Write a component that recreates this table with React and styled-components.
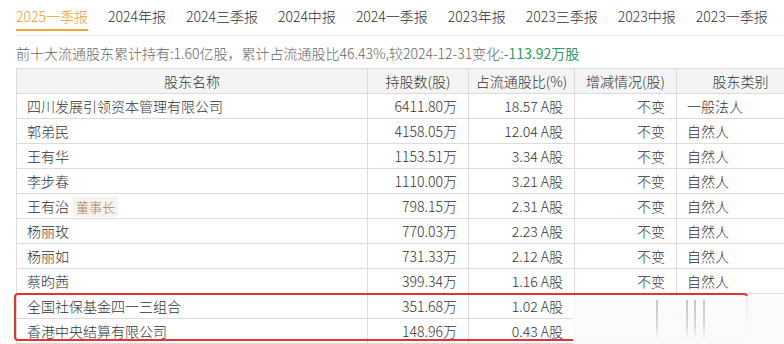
import React from 'react'
import styled, { createGlobalStyle } from 'styled-components';

const tabs = ['2025一季报', '2024年报', '2024三季报', '2024中报', '2024一季报', '2023年报', '2023三季报', '2023中报', '2023一季报'];

const rows = [
  { name: '四川发展引领资本管理有限公司', num: '6411.80万', pct: '18.57 A股', chg: '不变', type: '一般法人' },
  { name: '郭弟民', num: '4158.05万', pct: '12.04 A股', chg: '不变', type: '自然人' },
  { name: '王有华', num: '1153.51万', pct: '3.34 A股', chg: '不变', type: '自然人' },
  { name: '李步春', num: '1110.00万', pct: '3.21 A股', chg: '不变', type: '自然人' },
  { name: '王有治', tag: '董事长', num: '798.15万', pct: '2.31 A股', chg: '不变', type: '自然人' },
  { name: '杨丽玫', num: '770.03万', pct: '2.23 A股', chg: '不变', type: '自然人' },
  { name: '杨丽如', num: '731.33万', pct: '2.12 A股', chg: '不变', type: '自然人' },
  { name: '蔡昀茜', num: '399.34万', pct: '1.16 A股', chg: '不变', type: '自然人' },
  { name: '全国社保基金四一三组合', num: '351.68万', pct: '1.02 A股', chg: '', type: '' },
  { name: '香港中央结算有限公司', num: '148.96万', pct: '0.43 A股', chg: '', type: '' },
];

const GlobalStyle = createGlobalStyle`
  body {
    margin: 0;
    background: #ffffff;
    font-family: "Noto Sans CJK SC", "Liberation Sans", sans-serif;
    font-weight: 300;
    overflow: hidden;
  }
`;

export default function App() {
  return (
    <Page>
      <GlobalStyle />
      <Tabs>
        {tabs.map((t, i) => (
          <Tab key={t} active={i === 0}>{t}</Tab>
        ))}
      </Tabs>
      <Summary>
        前十大流通股东累计持有:1.60亿股，累计占流通股比46.43%,较2024-12-31变化:<Green>-113.92万股</Green>
      </Summary>
      <TableWrap>
        <Table>
          <colgroup>
            <col style={{ width: 351 }} />
            <col style={{ width: 101 }} />
            <col style={{ width: 106 }} />
            <col style={{ width: 102 }} />
            <col style={{ width: 128 }} />
          </colgroup>
          <thead>
            <tr>
              <Th>股东名称</Th>
              <Th>持股数(股)</Th>
              <Th>占流通股比(%)</Th>
              <Th>增减情况(股)</Th>
              <Th>股东类别</Th>
            </tr>
          </thead>
          <tbody>
            {rows.map((r) => (
              <tr key={r.name}>
                <Td>
                  {r.name}
                  {r.tag && <Tag>{r.tag}</Tag>}
                </Td>
                <Td align="right">{r.num}</Td>
                <Td align="right">{r.pct}</Td>
                <Td align="right">{r.chg}</Td>
                <Td>{r.type}</Td>
              </tr>
            ))}
          </tbody>
        </Table>
        <Mask>
          <Smudge left={83} />
          <Smudge left={113} />
          <Smudge left={121} />
          <Smudge left={130} />
        </Mask>
        <RedBox />
      </TableWrap>
    </Page>
  );
}

const Page = styled.div`
  padding-left: 16px;
  width: 784px;
  height: 344px;
  box-sizing: border-box;
  overflow: hidden;
  color: #333;
`;

const Tabs = styled.div`
  display: flex;
  gap: 20px;
  height: 36px;
  border-bottom: 1px solid #e6e6e6;
  box-sizing: border-box;
  white-space: nowrap;
`;

const Tab = styled.div`
  flex: none;
  font-size: 14px;
  line-height: 20px;
  padding-top: 6px;
  height: 23px;
  color: ${(p) => (p.active ? '#e8a033' : '#333')};
  border-bottom: ${(p) => (p.active ? '2px solid #eea437' : '2px solid transparent')};
`;

const Summary = styled.div`
  font-size: 14px;
  line-height: 20px;
  padding: 7px 0 5px;
  color: #666;
  white-space: nowrap;
`;

const Green = styled.span`
  color: #2f9a5a;
  font-weight: 400;
`;

const TableWrap = styled.div`
  position: relative;
  width: 788px;
`;

const Table = styled.table`
  border-collapse: collapse;
  table-layout: fixed;
  width: 788px;
  font-size: 14px;
`;

const Th = styled.th`
  height: 24px;
  padding: 0;
  font-weight: 300;
  background: #f4f4f4;
  border: 1px solid #dcdcdc;
  color: #333;
  line-height: 20px;
  text-align: center;
`;

const Td = styled.td`
  height: 24px;
  padding: 0 11px 0 10px;
  border: 1px solid #dcdcdc;
  line-height: 20px;
  text-align: ${(p) => p.align || 'left'};
  white-space: nowrap;
`;

const Tag = styled.span`
  display: inline-block;
  margin-left: 4px;
  padding: 0 3px;
  font-size: 13px;
  line-height: 20px;
  background: #f6f2ee;
  color: #a8845c;
  border-radius: 2px;
`;

const RedBox = styled.div`
  position: absolute;
  left: -2px;
  top: 225px;
  width: 730px;
  height: 44px;
  border: 2px solid #e3342f;
  border-radius: 4px;
  pointer-events: none;
`;

const Mask = styled.div`
  position: absolute;
  left: 557px;
  top: 228px;
  width: 260px;
  height: 52px;
  z-index: 2;
  background: linear-gradient(180deg, rgba(252, 252, 252, 0.9) 0%, rgba(250, 250, 250, 0.97) 40%, #fbfbfb 100%);
`;

const Smudge = styled.span`
  position: absolute;
  left: ${(p) => p.left}px;
  top: 4px;
  width: 2px;
  height: 40px;
  background: linear-gradient(180deg, #c8c8c8, #d8d8d8 60%, rgba(230, 230, 230, 0));
`;
